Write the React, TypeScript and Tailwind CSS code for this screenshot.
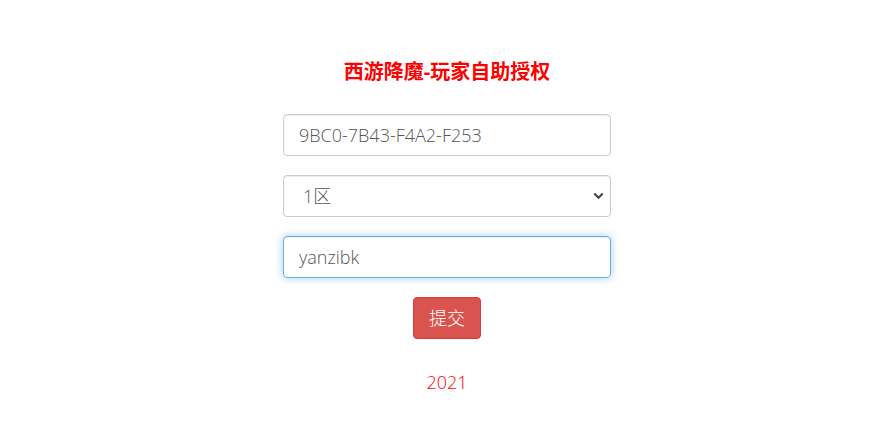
import React from "react";

export default function App() {
  const font = { fontFamily: '"Open Sans", "Noto Sans CJK SC", sans-serif' };
  return (
    <div className="w-[891px] h-[424px] bg-white flex flex-col items-center pl-[3px]" style={font}>
      <div className="mt-[58px] h-[28px] leading-[28px] text-[20px] font-bold text-[#ff0000]">
        西游降魔-玩家自助授权
      </div>
      <div className="mt-[28px] w-[328px] flex flex-col gap-[19px]">
        <input
          readOnly
          value="9BC0-7B43-F4A2-F253"
          className="w-full h-[42px] px-[15px] rounded-[4px] border border-[#cccccc] text-[18px] font-light text-[#555555] shadow-[inset_0_1px_1px_rgba(0,0,0,0.075)] outline-none"
          style={font}
        />
        <div className="relative w-full h-[42px] rounded-[4px] border border-[#cccccc] shadow-[inset_0_1px_1px_rgba(0,0,0,0.075)] flex items-center pl-[19px] text-[18px] font-light text-[#555555]">
          <span>1区</span>
          <svg className="absolute right-[6px] top-[16px]" width="11" height="8" viewBox="0 0 11 8">
            <path d="M1.3 1.5 L5.5 5.7 L9.7 1.5" fill="none" stroke="#444" strokeWidth="2.2" />
          </svg>
        </div>
        <input
          readOnly
          value="yanzibk"
          className="w-full h-[42px] px-[15px] rounded-[4px] border border-[#66afe9] text-[18px] font-light text-[#555555] shadow-[inset_0_1px_1px_rgba(0,0,0,0.075),0_0_8px_rgba(102,175,233,0.6)] outline-none"
          style={font}
        />
      </div>
      <button className="mt-[19px] w-[68px] h-[42px] rounded-[4px] bg-[#d9534f] border border-[#d43f3a] text-white text-[18px] font-light" style={font}>
        提交
      </button>
      <div className="mt-[30px] h-[26px] leading-[26px] text-[18px] font-light text-[#ff0000]">2021</div>
    </div>
  );
}
